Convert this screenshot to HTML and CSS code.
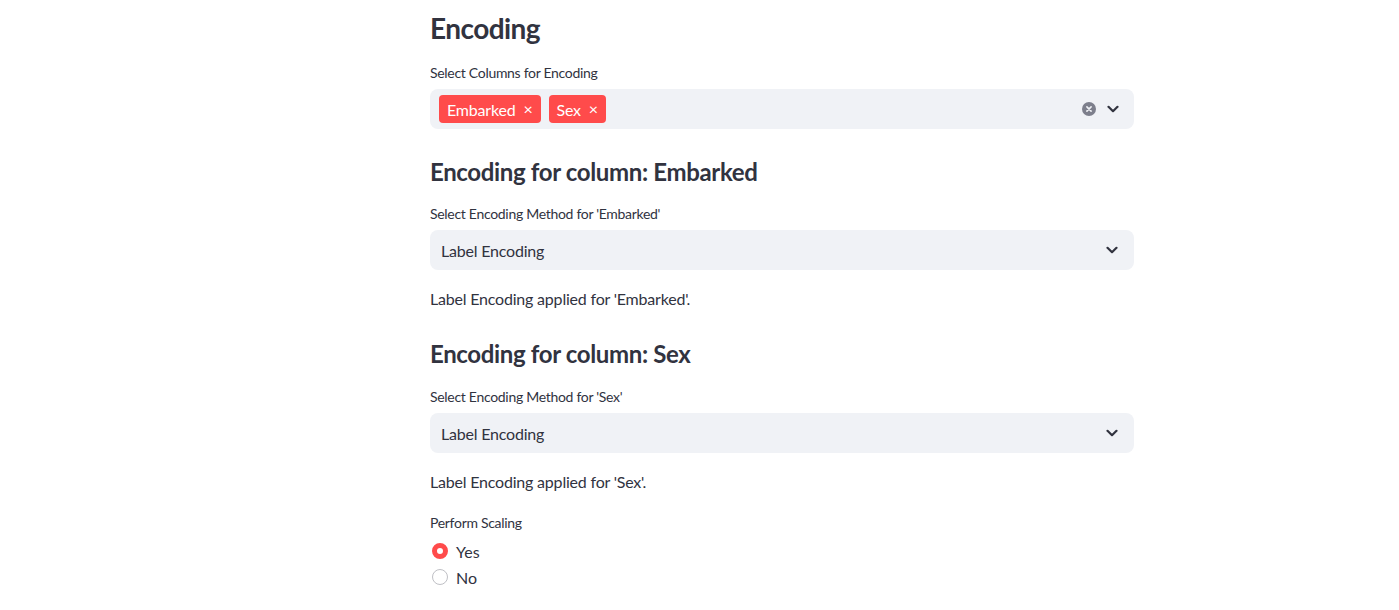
FILE: index.html
```html
<!DOCTYPE html>
<html>
<head>
<meta charset="utf-8">
<link rel="stylesheet" href="styles.css">
</head>
<body>
<main class="main">
  <h3 class="title">Encoding</h3>
  <div class="label lbl-first">Select Columns for Encoding</div>
  <div class="box multi">
    <div class="tags">
      <span class="tag">Embarked<span class="x">×</span></span>
      <span class="tag">Sex<span class="x">×</span></span>
    </div>
    <div class="icons">
      <svg class="clear" width="14" height="14" viewBox="0 0 14 14"><circle cx="7" cy="7" r="7" fill="#7d7f8c"/><path d="M4.9 4.9L9.1 9.1M9.1 4.9L4.9 9.1" stroke="#f0f2f6" stroke-width="1.6" stroke-linecap="round"/></svg>
      <svg class="chev" width="12" height="8" viewBox="0 0 12 8"><path d="M1.5 1.8L6 6.2L10.5 1.8" fill="none" stroke="#31333f" stroke-width="2.2" stroke-linecap="round" stroke-linejoin="round"/></svg>
    </div>
  </div>

  <h4 class="sub">Encoding for column: Embarked</h4>
  <div class="label lbl-sub">Select Encoding Method for 'Embarked'</div>
  <div class="box select">
    <span class="value">Label Encoding</span>
    <svg class="chev" width="12" height="8" viewBox="0 0 12 8"><path d="M1.5 1.8L6 6.2L10.5 1.8" fill="none" stroke="#31333f" stroke-width="2.2" stroke-linecap="round" stroke-linejoin="round"/></svg>
  </div>
  <p class="text">Label Encoding applied for 'Embarked'.</p>

  <h4 class="sub sub-next">Encoding for column: Sex</h4>
  <div class="label lbl-sub2">Select Encoding Method for 'Sex'</div>
  <div class="box select">
    <span class="value">Label Encoding</span>
    <svg class="chev" width="12" height="8" viewBox="0 0 12 8"><path d="M1.5 1.8L6 6.2L10.5 1.8" fill="none" stroke="#31333f" stroke-width="2.2" stroke-linecap="round" stroke-linejoin="round"/></svg>
  </div>
  <p class="text">Label Encoding applied for 'Sex'.</p>

  <div class="label lbl-radio">Perform Scaling</div>
  <div class="radios">
    <label class="radio"><span class="dot on"></span>Yes</label>
    <label class="radio"><span class="dot"></span>No</label>
  </div>
</main>
</body>
</html>
```

FILE: styles.css
```css
* { box-sizing: border-box; }
html, body { margin: 0; padding: 0; background: #fff; }
body {
  font-family: "Lato", "Noto Sans", sans-serif;
  color: #31333f;
}
.main {
  width: 704px;
  margin-left: 430px;
  padding-top: 8px;
  display: flex;
  flex-direction: column;
}
.title {
  margin: 0;
  font-size: 28px;
  font-weight: 700;
  line-height: 40px;
  letter-spacing: -0.55px;
}
.label {
  font-size: 14px;
  line-height: 20px;
  height: 20px;
  letter-spacing: -0.3px;
}
.lbl-first { margin-top: 15px; }
.lbl-sub { margin-top: 14px; }
.lbl-sub2 { margin-top: 15px; }
.lbl-radio { margin-top: 19px; }
.box {
  margin-top: 6px;
  height: 40px;
  background: #f0f2f6;
  border-radius: 8px;
  display: flex;
  align-items: center;
  justify-content: space-between;
}
.multi { padding: 0 15px 0 9px; }
.tags { display: flex; gap: 8px; }
.tag {
  background: #ff4b4b;
  color: #fff;
  height: 28px;
  border-radius: 4px;
  display: inline-flex;
  align-items: center;
  padding: 0 8px;
  font-size: 16px;
  gap: 8px;
  letter-spacing: -0.2px;
}
.x { font-size: 16px; line-height: 1; }
.icons { display: flex; align-items: center; gap: 11px; }
.select { padding: 0 16px 0 11px; }
.value { font-size: 16px; letter-spacing: -0.2px; }
.sub {
  margin: 25px 0 0;
  font-size: 24px;
  font-weight: 700;
  line-height: 36px;
  letter-spacing: -0.35px;
}
.text {
  margin: 17px 0 0;
  font-size: 16px;
  line-height: 24px;
  letter-spacing: -0.2px;
}
.radios {
  margin-top: 5px;
  display: flex;
  flex-direction: column;
}
.radio {
  display: flex;
  align-items: center;
  height: 26px;
  font-size: 16px;
  gap: 8px;
  padding-left: 2px;
}
.dot {
  width: 16px;
  height: 16px;
  border-radius: 50%;
  border: 1px solid #bfc0c5;
  background: #fff;
  display: inline-block;
}
.dot.on {
  border: 5px solid #ff4b4b;
}
```
